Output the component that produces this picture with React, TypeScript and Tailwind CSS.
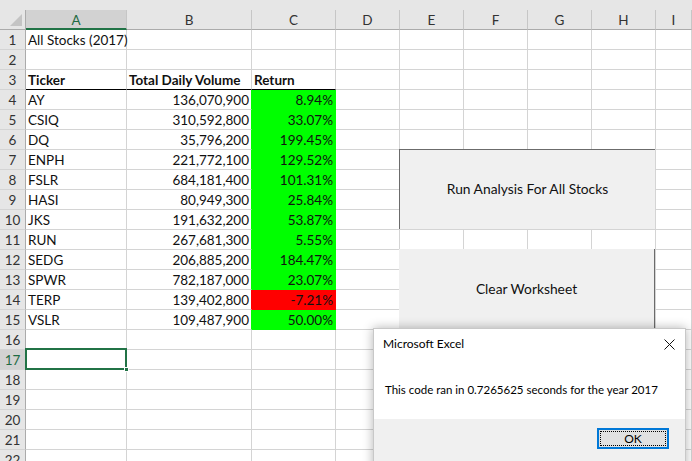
import React from 'react';

type Row = { ticker: string; volume: string; ret: string; neg?: boolean };

const rows: Row[] = [
  { ticker: 'AY', volume: '136,070,900', ret: '8.94%' },
  { ticker: 'CSIQ', volume: '310,592,800', ret: '33.07%' },
  { ticker: 'DQ', volume: '35,796,200', ret: '199.45%' },
  { ticker: 'ENPH', volume: '221,772,100', ret: '129.52%' },
  { ticker: 'FSLR', volume: '684,181,400', ret: '101.31%' },
  { ticker: 'HASI', volume: '80,949,300', ret: '25.84%' },
  { ticker: 'JKS', volume: '191,632,200', ret: '53.87%' },
  { ticker: 'RUN', volume: '267,681,300', ret: '5.55%' },
  { ticker: 'SEDG', volume: '206,885,200', ret: '184.47%' },
  { ticker: 'SPWR', volume: '782,187,000', ret: '23.07%' },
  { ticker: 'TERP', volume: '139,402,800', ret: '-7.21%', neg: true },
  { ticker: 'VSLR', volume: '109,487,900', ret: '50.00%' },
];

const cols = ['A', 'B', 'C', 'D', 'E', 'F', 'G', 'H', 'I'];
const gridCols = 'grid grid-cols-[26px_101px_125px_84px_64px_64px_64px_64px_64px_1fr]';

const cell = 'h-[20px] border-r border-b border-[#d4d4d4] pt-[2px] leading-[17px] whitespace-nowrap overflow-visible';

function RowHead({ n }: { n: number }) {
  const selected = n === 17;
  return (
    <div
      className={`h-[20px] border-r border-b border-r-[#ababab] border-b-[#d4d4d4] text-center pt-[2px] leading-[17px] text-[13.5px] ${
        selected ? 'bg-[#d2d2d2] text-[#1f6b43]' : 'bg-[#e6e6e6] text-[#333]'
      }`}
    >
      {n}
    </div>
  );
}

function Filler({ n }: { n: number }) {
  return (
    <>
      {Array.from({ length: n }).map((_, i) => (
        <div key={i} className={cell} />
      ))}
    </>
  );
}

export default function App() {
  const total = 22;
  return (
    <div className="relative w-[692px] h-[461px] overflow-hidden bg-white text-[#111] font-['Lato',_'Liberation_Sans',_sans-serif] text-[13.5px]">
      <div className="h-[10px] bg-[#e6e6e6]" />
      {/* column headers */}
      <div className={`${gridCols} bg-[#e6e6e6]`}>
        <div className="relative h-[20px] border-r border-b border-[#ababab]">
          <svg className="absolute right-[3px] bottom-[3px]" width="12" height="12" viewBox="0 0 12 12">
            <polygon points="12,0 12,12 0,12" fill="#c4c4c4" />
          </svg>
        </div>
        {cols.map((c) => (
          <div
            key={c}
            className={`h-[20px] text-center pt-[2px] leading-[17px] border-r border-r-[#c6c6c6] ${
              c === 'A'
                ? 'bg-[#d2d2d2] text-[#1f6b43] border-b-2 border-b-[#217346]'
                : 'border-b border-b-[#ababab] text-[#333]'
            }`}
          >
            {c}
          </div>
        ))}
      </div>

      {Array.from({ length: total }).map((_, i) => {
        const n = i + 1;
        if (n === 1) {
          return (
            <div key={n} className={gridCols}>
              <RowHead n={n} />
              <div className={`${cell} pl-[2px]`}>All Stocks (2017)</div>
              <Filler n={8} />
            </div>
          );
        }
        if (n === 3) {
          return (
            <div key={n} className={gridCols}>
              <RowHead n={n} />
              <div className={`${cell} pl-[2px] font-bold border-b-black`}>Ticker</div>
              <div className={`${cell} pl-[2px] font-bold border-b-black`}>Total Daily Volume</div>
              <div className={`${cell} pl-[2px] font-bold border-b-black`}>Return</div>
              <Filler n={6} />
            </div>
          );
        }
        if (n >= 4 && n <= 15) {
          const r = rows[n - 4];
          const fill = r.neg ? 'bg-[#ff0000] border-[#ff0000]' : 'bg-[#00ff00] border-[#00ff00]';
          const bEdge = r.neg ? 'border-r-[#ff0000]' : 'border-r-[#00ff00]';
          return (
            <div key={n} className={gridCols}>
              <RowHead n={n} />
              <div className={`${cell} pl-[2px]`}>{r.ticker}</div>
              <div className={`${cell} ${bEdge} text-right pr-[2px]`}>{r.volume}</div>
              <div className={`h-[20px] border-r border-b pt-[2px] leading-[17px] text-right pr-[2px] ${fill}`}>{r.ret}</div>
              <Filler n={6} />
            </div>
          );
        }
        if (n === 17) {
          return (
            <div key={n} className={gridCols}>
              <RowHead n={n} />
              <div className="relative h-[20px] border-r border-b border-[#d4d4d4]">
                <div className="absolute -left-[1px] -top-[2px] w-[102px] h-[22px] border-2 border-[#217346]" />
                <div className="absolute -right-[3px] -bottom-[3px] w-[5px] h-[5px] bg-[#217346] border border-white" />
              </div>
              <Filler n={8} />
            </div>
          );
        }
        return (
          <div key={n} className={gridCols}>
            <RowHead n={n} />
            <Filler n={9} />
          </div>
        );
      })}

      {/* form buttons */}
      <div className="absolute left-[399px] top-[149px] w-[256px] h-[80px] bg-[#f0f0f0] border-t border-l border-[#6b6b6b] flex items-center justify-center text-[13.8px] text-[#111]">
        Run Analysis For All Stocks
      </div>
      <div className="absolute left-[399px] top-[249px] w-[256px] h-[80px] bg-[#f0f0f0] border-r border-[#6b6b6b] flex items-center justify-center text-[13.8px] text-[#111]">
        Clear Worksheet
      </div>

      {/* message box */}
      <div className="absolute left-[373px] top-[328px] w-[313px] h-[150px] bg-[#f0f0f0] border border-[#c8c8c8] shadow-[0_0_10px_rgba(0,0,0,0.3)] text-[11.5px] text-black">
        <div className="bg-white h-[90px] flex flex-col">
          <div className="flex items-center justify-between h-[30px] pl-[9px] pr-[10px]">
            <span className="text-[12px]">Microsoft Excel</span>
            <svg width="11" height="11" viewBox="0 0 11 11">
              <path d="M0.5 0.5 L10.5 10.5 M10.5 0.5 L0.5 10.5" stroke="#111" strokeWidth="1" />
            </svg>
          </div>
          <div className="pl-[11px] pt-[22px]">This code ran in 0.7265625 seconds for the year 2017</div>
        </div>
        <div className="flex justify-end pt-[9px] pr-[16px]">
          <div className="w-[72px] h-[21px] border-2 border-[#0078d7] bg-[#e1e1e1] p-[1px]">
            <div className="w-full h-full border border-dotted border-black flex items-center justify-center leading-none text-[12px]">
              OK
            </div>
          </div>
        </div>
      </div>
    </div>
  );
}
